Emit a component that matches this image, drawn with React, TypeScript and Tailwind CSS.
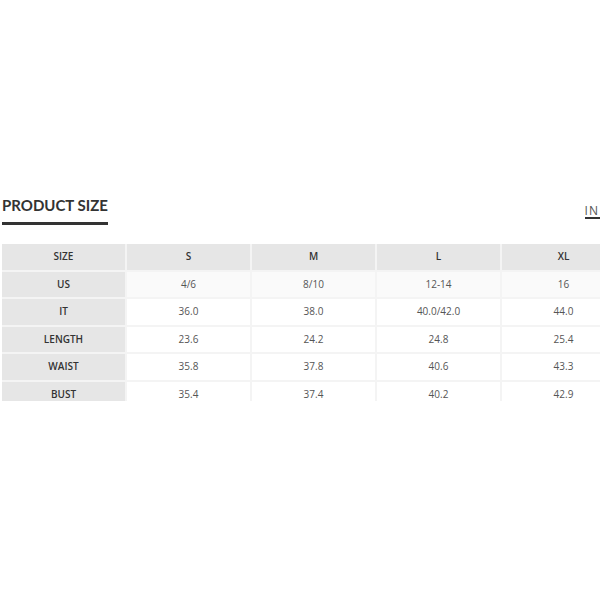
const columns = ['S', 'M', 'L', 'XL'];

const rows: { label: string; values: string[] }[] = [
  { label: 'US', values: ['4/6', '8/10', '12-14', '16'] },
  { label: 'IT', values: ['36.0', '38.0', '40.0/42.0', '44.0'] },
  { label: 'LENGTH', values: ['23.6', '24.2', '24.8', '25.4'] },
  { label: 'WAIST', values: ['35.8', '37.8', '40.6', '43.3'] },
  { label: 'BUST', values: ['35.4', '37.4', '40.2', '42.9'] },
];

function Cell({
  children,
  className = '',
}: {
  children: React.ReactNode;
  className?: string;
}) {
  return (
    <div
      className={`flex h-[27.5px] w-[125px] shrink-0 items-center justify-center border-r-2 border-b-2 border-[#f4f4f4] ${className}`}
    >
      {children}
    </div>
  );
}

export default function App() {
  return (
    <div className="h-[600px] w-[600px] overflow-hidden bg-white font-['Open_Sans',sans-serif]">
      <div className="flex items-end justify-between pt-[196px] pl-[2px]">
        <div className="flex flex-col">
          <h2 className="font-['Lato',sans-serif] text-[15px] font-bold leading-[18px] text-[#333]">
            PRODUCT SIZE
          </h2>
          <div className="mt-[8px] h-[3px] w-[106px] bg-[#333]" />
        </div>
        <span className="mb-[6px] border-b-2 border-[#333] pr-[1px] text-[12px] leading-[13px] tracking-[1px] text-[#555]">
          IN
        </span>
      </div>

      <div className="mt-[19px] ml-[2px] h-[157px] overflow-hidden">
        <div className="flex bg-[#e6e6e6] text-[10px] font-semibold text-[#333]">
          <Cell>SIZE</Cell>
          {columns.map((c) => (
            <Cell key={c}>{c}</Cell>
          ))}
        </div>
        {rows.map((row, i) => (
          <div
            key={row.label}
            className={`flex text-[10px] text-[#555] ${i === 0 ? 'bg-[#fafafa]' : 'bg-white'}`}
          >
            <Cell className="bg-[#e6e6e6] font-semibold text-[#333]">{row.label}</Cell>
            {row.values.map((v, j) => (
              <Cell key={j}>{v}</Cell>
            ))}
          </div>
        ))}
      </div>
    </div>
  );
}
